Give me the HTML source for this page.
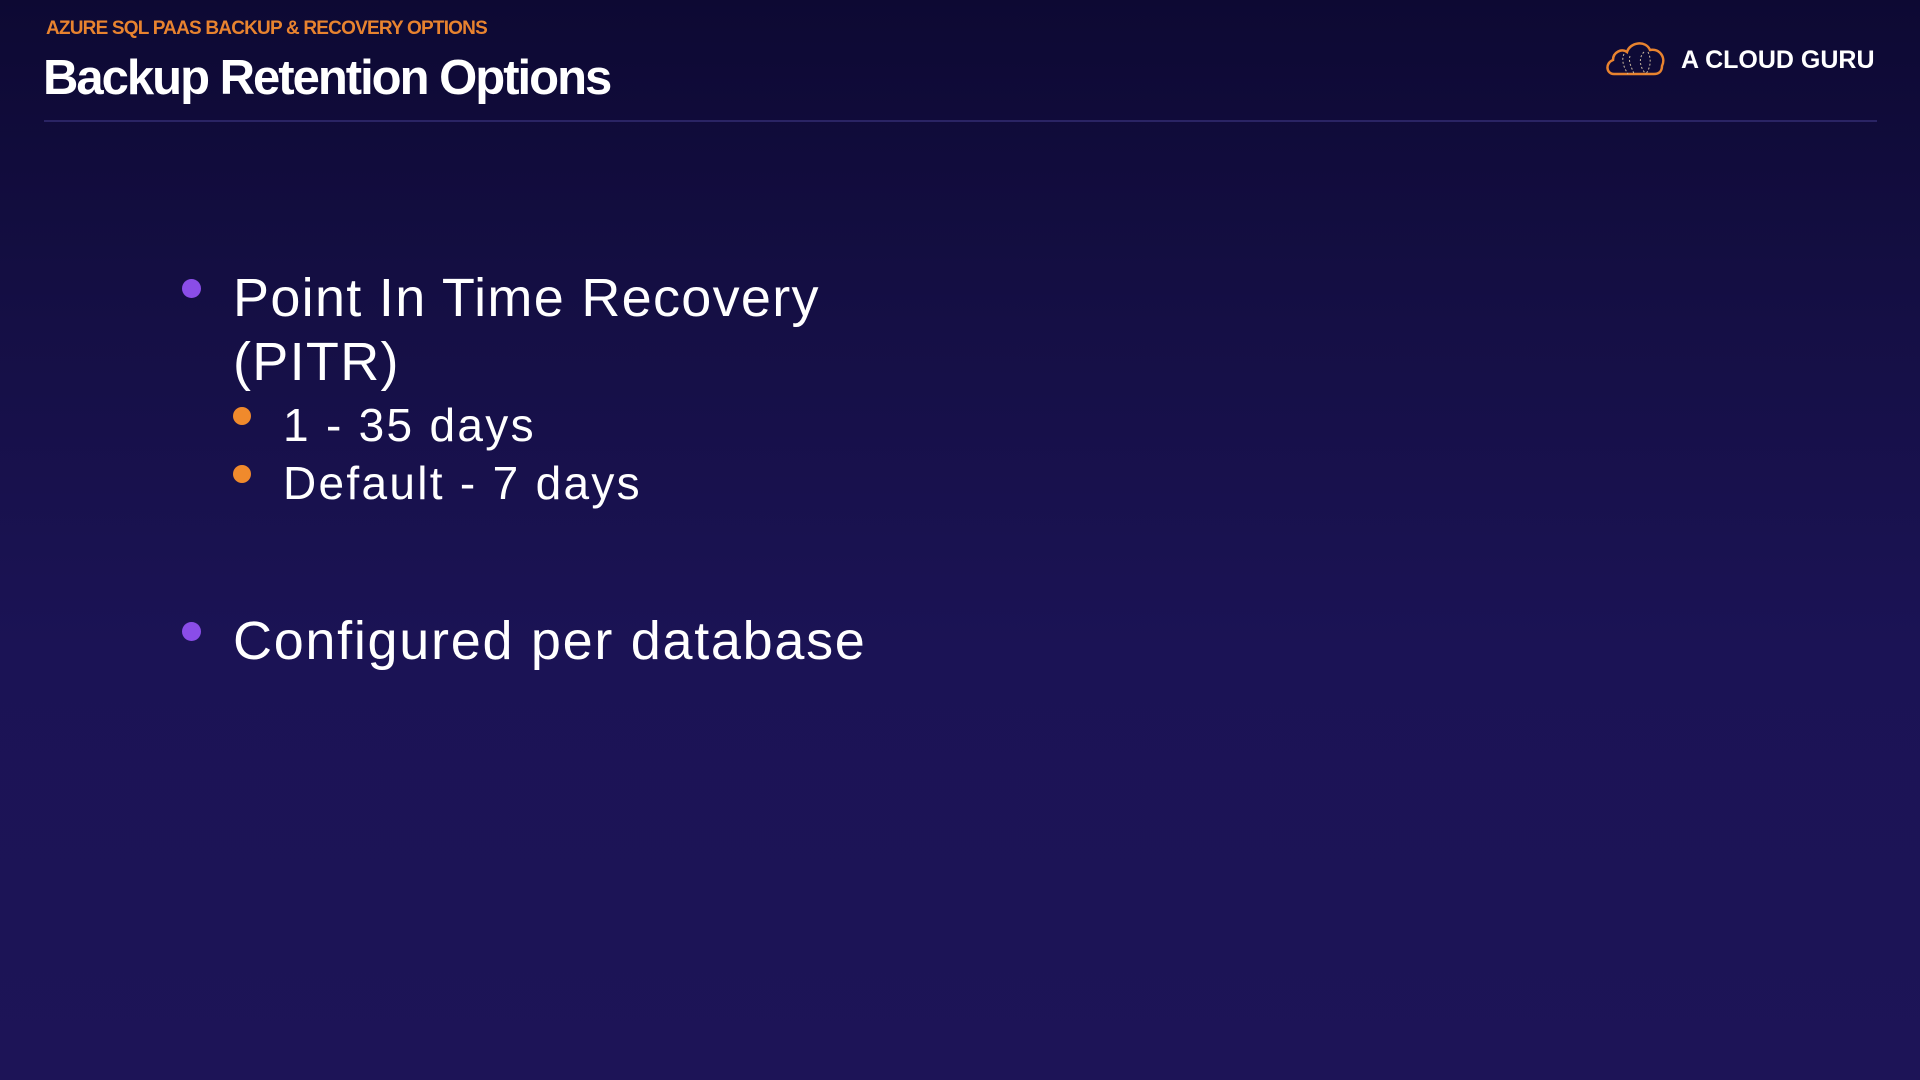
<!DOCTYPE html>
<html><head><meta charset="utf-8"><style>
body{margin:0;width:1920px;height:1080px;overflow:hidden;background:linear-gradient(180deg,#0d0933 0%,#150f45 30%,#1b1355 60%,#1d1457 100%);font-family:"Liberation Sans",sans-serif;position:relative;color:#fff}
.a{position:absolute;white-space:nowrap}
.dot{position:absolute;border-radius:50%}
</style></head><body>
<div class="a" style="left:46px;top:18px;font-size:19px;font-weight:bold;color:#e8832f;letter-spacing:-0.8px">AZURE SQL PAAS BACKUP &amp; RECOVERY OPTIONS</div>
<div class="a" style="left:43px;top:50px;font-size:49px;font-weight:bold;letter-spacing:-2px">Backup Retention Options</div>
<div class="a" style="left:44px;top:120px;width:1833px;height:2px;background:#2a2464"></div>
<svg class="a" style="left:1604px;top:38px" width="64" height="40" viewBox="0 0 64 40"><path d="M10 36 C2 36 1 25 9 22 C9 14 18 10 23 14 C26 4 42 2 46 12 C56 10 62 20 58 28 C58 34 54 36 50 36 Z" fill="none" stroke="#e8832f" stroke-width="2.5"/><path d="M20 16 C17 22 20 30 24 36 M26 18 C24 24 28 30 30 36 M40 14 C34 20 36 30 42 36 M44 14 C48 22 46 30 42 36" fill="none" stroke="#c9b9a0" stroke-width="1" stroke-dasharray="2 2"/></svg>
<div class="a" style="left:1681px;top:46px;font-size:25px;font-weight:bold">A CLOUD GURU</div>
<div class="dot" style="left:182px;top:279px;width:19px;height:19px;background:#8a4de8"></div>
<div class="a" style="left:233px;top:266px;font-size:54px;line-height:64px;letter-spacing:1.3px">Point In Time Recovery<br>(PITR)</div>
<div class="dot" style="left:233px;top:407px;width:18px;height:18px;background:#f08a2c"></div>
<div class="a" style="left:283px;top:398px;font-size:46px;letter-spacing:2.3px">1 - 35 days</div>
<div class="dot" style="left:233px;top:465px;width:18px;height:18px;background:#f08a2c"></div>
<div class="a" style="left:283px;top:456px;font-size:46px;letter-spacing:2.3px">Default - 7 days</div>
<div class="dot" style="left:182px;top:622px;width:19px;height:19px;background:#8a4de8"></div>
<div class="a" style="left:233px;top:610px;font-size:54px;letter-spacing:1.7px">Configured per database</div>
</body></html>
